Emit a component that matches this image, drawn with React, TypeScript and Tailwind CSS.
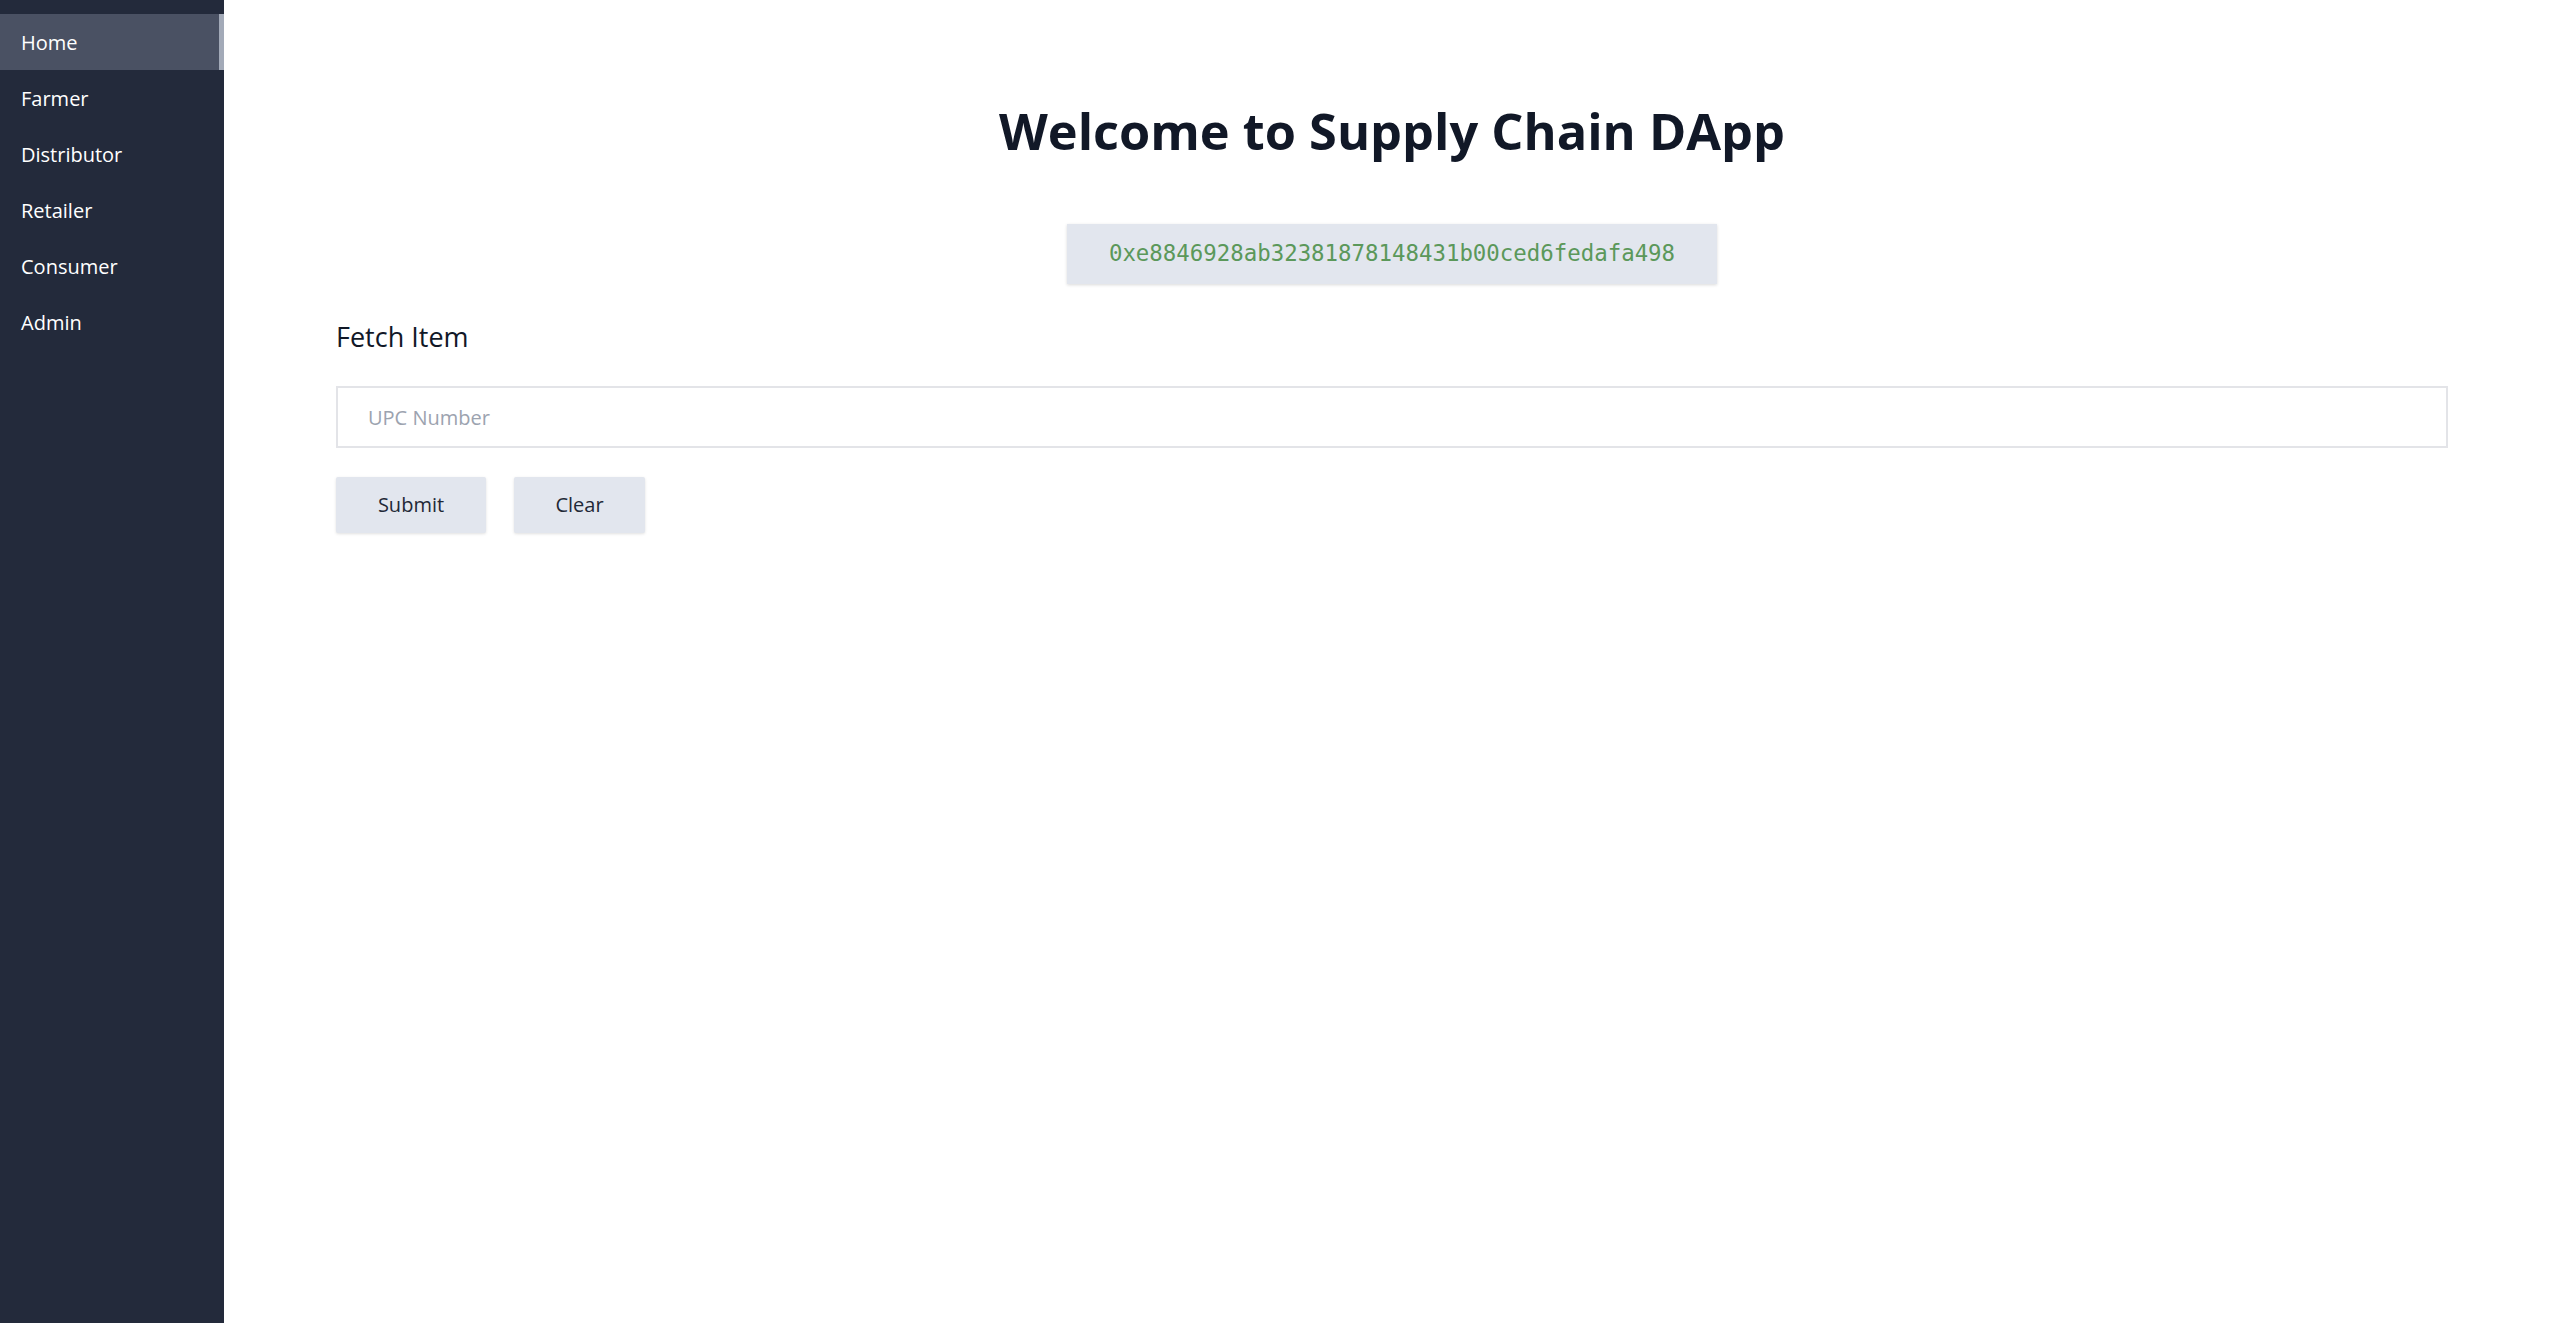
import React from "react";

const items = ["Home", "Farmer", "Distributor", "Retailer", "Consumer", "Admin"];

export default function App() {
  return (
    <div className="flex h-[1323px] w-full bg-white" style={{ fontFamily: '"Open Sans", "Noto Sans", sans-serif' }}>
      <aside className="flex w-[224px] shrink-0 flex-col bg-[#232a3b] pt-[14px]">
        {items.map((it, i) => (
          <div
            key={it}
            className={
              i === 0
                ? "flex h-[56px] items-center border-r-[5px] border-[#a3aab8] bg-[#4a5163] pl-[21px] pt-[2px] text-[20px] text-white"
                : "flex h-[56px] items-center pl-[21px] pt-[2px] text-[20px] text-white"
            }
          >
            {it}
          </div>
        ))}
      </aside>
      <main className="flex flex-1 flex-col px-[112px]">
        <h1 className="mt-[95px] text-center text-[50.5px] font-bold leading-[72px] text-[#111827]">
          Welcome to Supply Chain DApp
        </h1>
        <div className="mt-[57px] flex justify-center">
          <div className="flex h-[60px] w-[650px] items-center justify-center bg-[#e2e6ee] shadow-[0_1px_3px_rgba(0,0,0,0.15)]">
            <span className="text-[22.4px] text-[#5b985a]" style={{ fontFamily: '"DejaVu Sans Mono", "Liberation Mono", monospace' }}>
              0xe8846928ab32381878148431b00ced6fedafa498
            </span>
          </div>
        </div>
        <div className="mt-[33px] text-[27px] leading-[40px] text-[#111827]">Fetch Item</div>
        <input
          className="mt-[29px] h-[62px] w-full border-2 border-[#e3e4e8] px-[30px] text-[20px] outline-none placeholder:text-[#9ca3af]"
          placeholder="UPC Number"
        />
        <div className="mt-[29px] flex gap-[28px]">
          <button className="h-[56px] w-[150px] rounded-[2px] bg-[#e2e6ee] text-[20px] text-[#1f2937] shadow-[0_1px_3px_rgba(0,0,0,0.12)]">
            Submit
          </button>
          <button className="h-[56px] w-[131px] rounded-[2px] bg-[#e2e6ee] text-[20px] text-[#1f2937] shadow-[0_1px_3px_rgba(0,0,0,0.12)]">
            Clear
          </button>
        </div>
      </main>
    </div>
  );
}
